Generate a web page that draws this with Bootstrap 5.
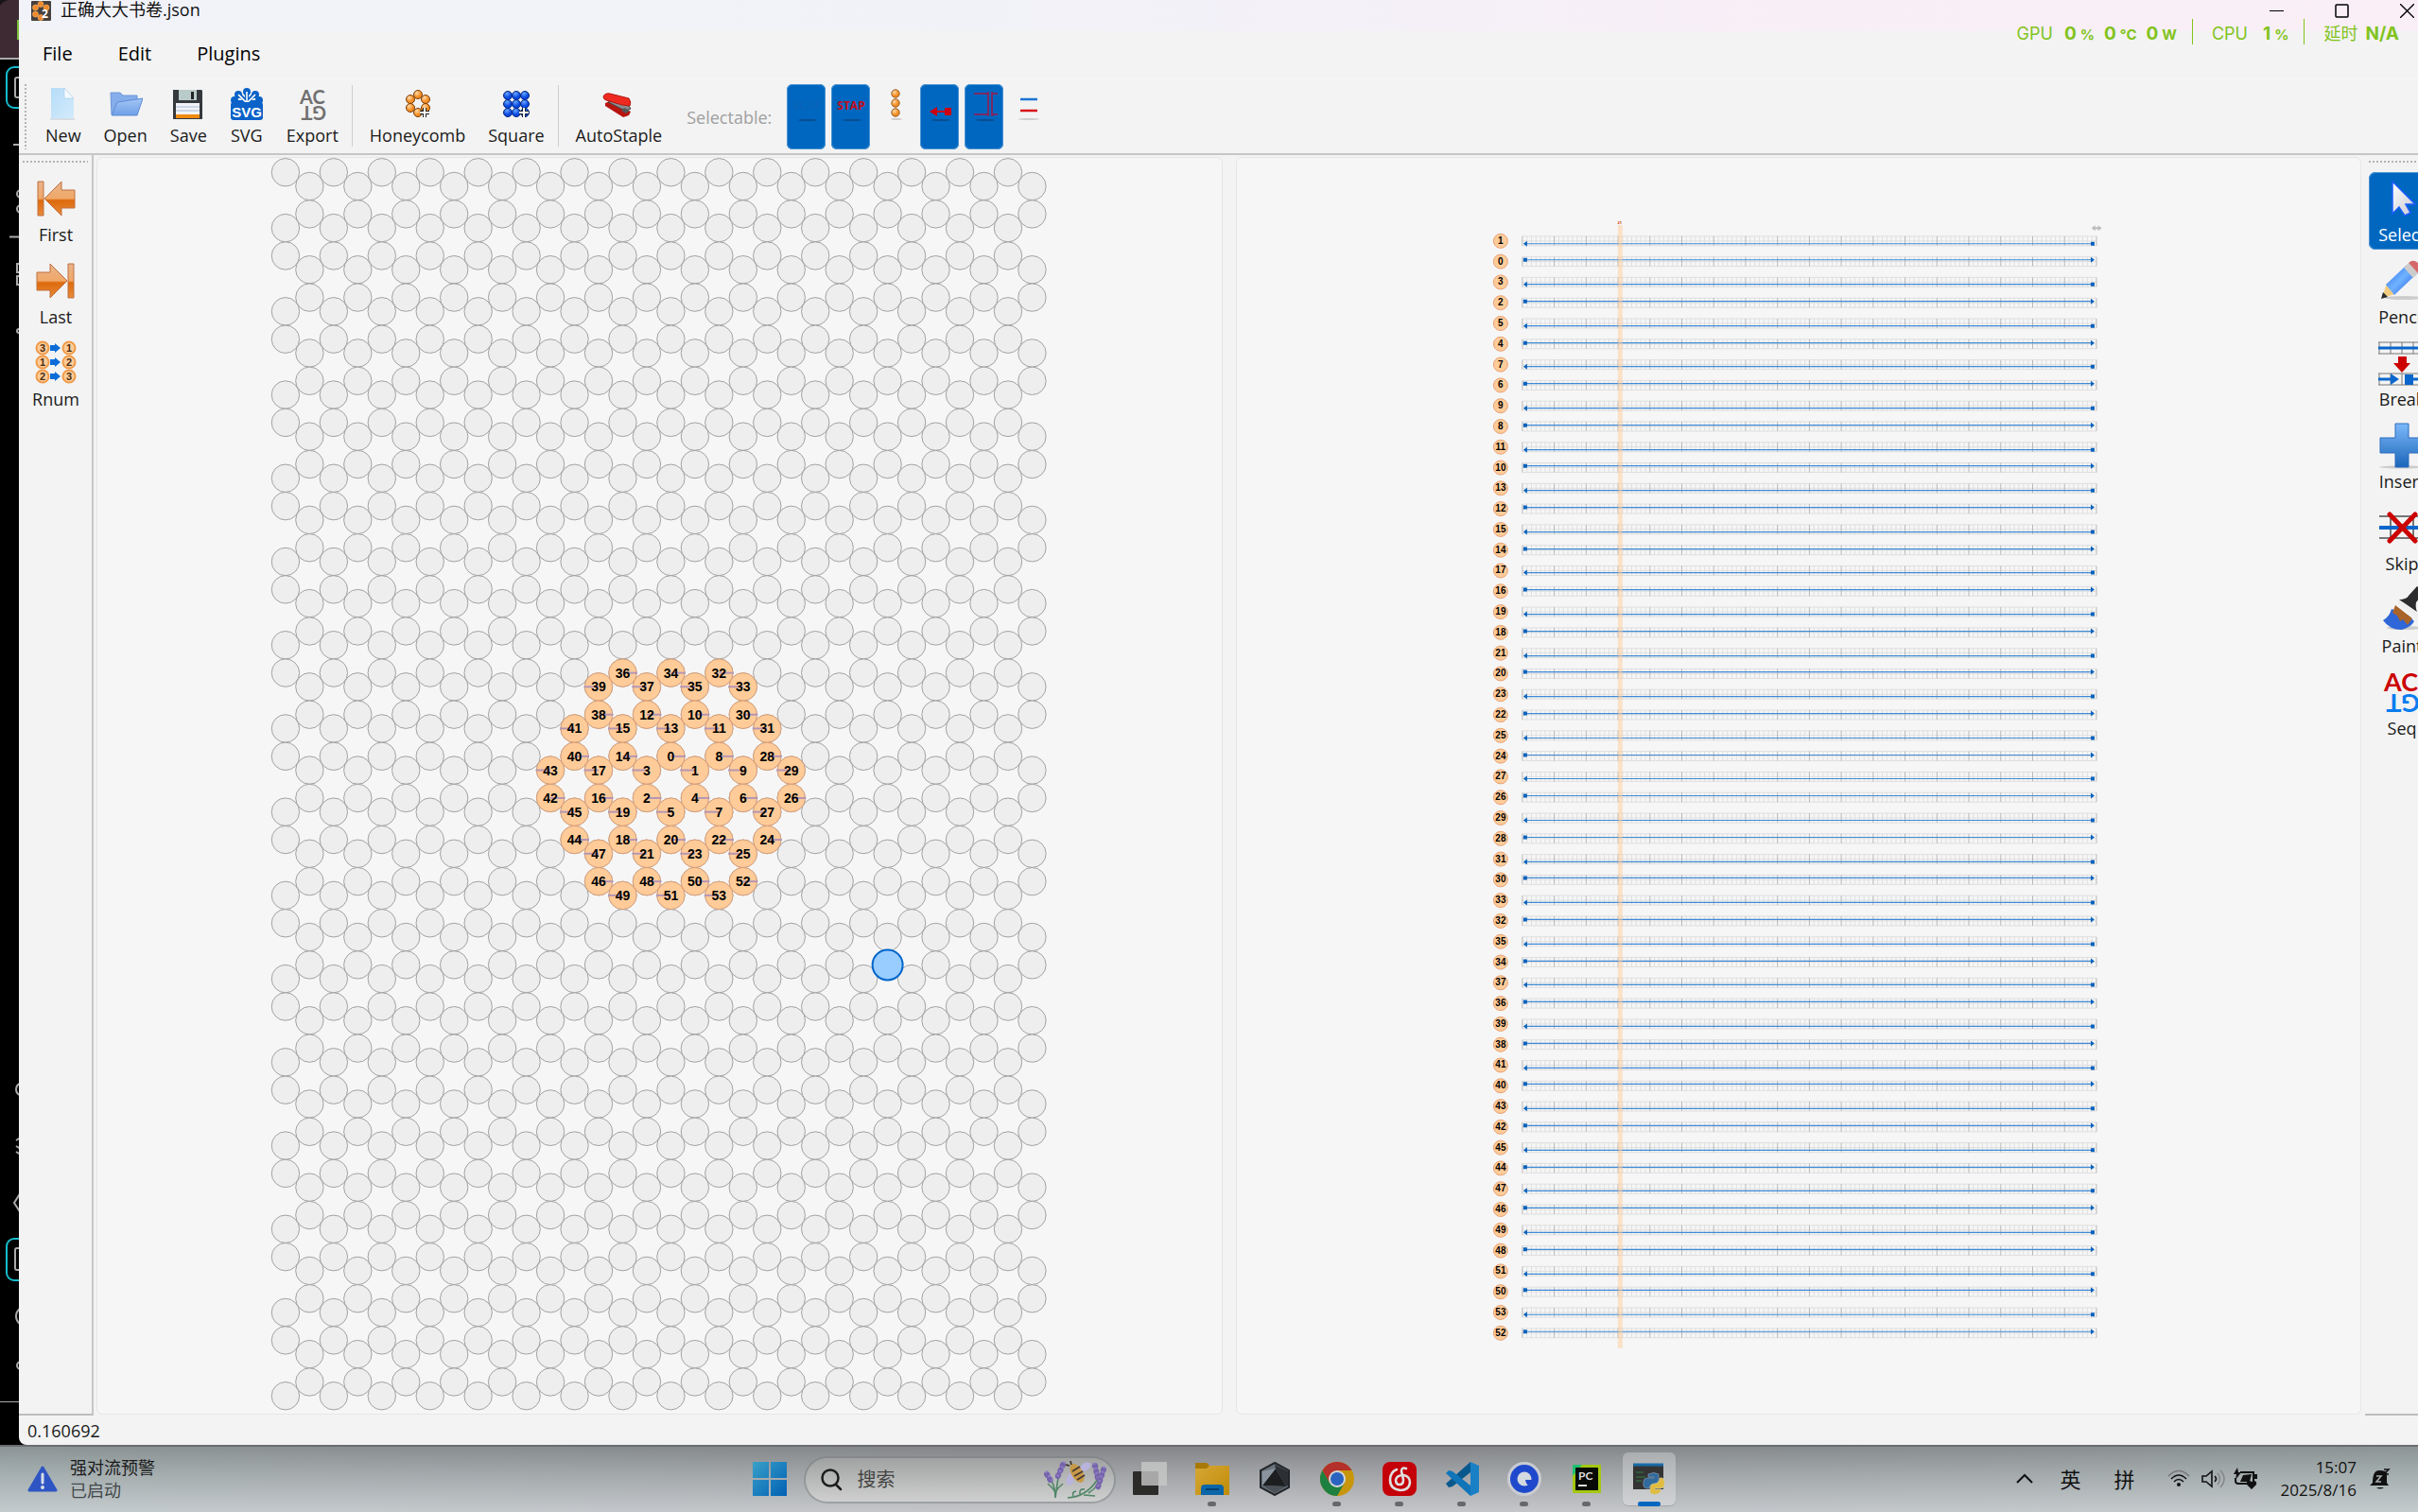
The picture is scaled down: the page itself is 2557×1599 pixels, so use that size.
<!DOCTYPE html>
<html lang="zh-CN">
<head>
<meta charset="utf-8">
<meta name="viewport" content="width=device-width, initial-scale=1">
<title>正确大大书卷.json</title>
<link href="https://cdn.jsdelivr.net/npm/bootstrap@5.3.0/dist/css/bootstrap.min.css" rel="stylesheet">
<style>
  html, body { height: 100%; }
  body { font-family: "Open Sans", "Noto Sans CJK SC", sans-serif; font-size: 18px; line-height: 26px; color: #1a1a1a; background: #000; overflow: hidden; }
  button { font: inherit; color: inherit; border: 0; background: none; padding: 0; }
  svg { display: block; flex: none; }
  .under-strip { width: 20px; background: #000; }
  .app-window { margin-right: -23px; background: #f3f3f3; border-bottom-left-radius: 8px; min-width: 0; }
  .title-strip { height: 33px; background: linear-gradient(90deg, #f1f3f9 0%, #f1f2f8 40%, #f8eef6 75%, #faeff7 100%); padding-left: 13px; }
  .title-text { line-height: 20px; margin-left: 10px; color: #111; }
  .caption-btn { width: 69px; height: 23px; }
  .menu-strip { height: 51px; font-size: 20px; color: #000; border-bottom: 1px solid #f8f8f8; padding: 0 0 2px 1px; }
  .menu-strip button { padding: 0 24px; }
  .tool-strip { height: 80px; border-bottom: 2px solid #c6c6c6; padding: 5px 0 4px 6px; }
  .grip-v { width: 2px; margin-right: 8px; background: repeating-linear-gradient(180deg, #b4b4b4 0 2px, transparent 2px 4px); }
  .tool { padding: 3px 12px 0; display: flex; flex-direction: column; align-items: center; border-radius: 6px; }
  .tool span { margin-top: 2px; }
  .rule { width: 1px; margin: 1px 6px 3px 2px; background: #cfcfcf; }
  .filter-label { color: #a0a0a0; padding: 0 16px 0 14px; }
  .filters { gap: 6px; }
  .filter { width: 41px; border-radius: 6px; display: flex; justify-content: center; padding-top: 3px; }
  .filter[aria-pressed=true], .side[aria-pressed=true] { background: #0067c0; box-shadow: inset 0 0 0 1px #4a94d4; color: #fff; }
  .side-strip { width: 79px; padding: 6px 4px 0; border-bottom: 2px solid #bdbdbd; background: #f3f3f3; }
  .side-left { border-right: 2px solid #c6c6c6; }
  .grip-h { height: 2px; margin-bottom: 10px; background: repeating-linear-gradient(90deg, #b4b4b4 0 2px, transparent 2px 4px); }
  .side { width: 70px; height: 82px; padding-top: 5px; margin-bottom: 5px; border-radius: 7px; display: flex; flex-direction: column; align-items: center; flex: none; }
  .side svg { overflow: visible; }
  .panes { gap: 14px; padding: 2px 4px 1px 3px; background: #f3f3f3; min-width: 0; }
  .pane { flex: 1 1 0; min-width: 0; min-height: 0; background: #f6f6f6; border: 1px solid #e6e6e6; border-radius: 6px; }
  .pane svg { width: 100%; height: 100%; }
  .status-strip { height: 31px; padding: 3px 9px; }
  .hud { top: 20px; right: 20px; height: 27px; color: #82c31e; font-family: Inter, "Noto Sans CJK SC", sans-serif; font-size: 18px; pointer-events: none; }
  .hud span, .hud b { padding-top: 5px; }
  .hud b { font-size: 19px; }
  .hud b small { font-size: 15px; font-weight: 700; margin-left: 4px; }
  .hud .reading { margin-left: 10px; }
  .hud i { width: 1px; height: 27px; background: #82c31e; }
  .task-strip { height: 71px; display: grid; grid-template-columns: 1fr auto 1fr; border-top: 2px solid #6a6c6d;
    background: linear-gradient(90deg, rgba(190,216,216,.25), rgba(200,190,200,.12) 40%, rgba(200,190,200,.12) 60%, rgba(190,216,214,.25)), linear-gradient(180deg, #7b7e80, #9b9fa1 40%, #c5c7ca); }
  .widget { padding: 0 0 2px 29px; gap: 13px; line-height: 24px; text-align: left; }
  .widget small { font-size: 18px; color: #43484a; display: block; }
  .launcher { width: 66px; height: 69px; display: flex; align-items: center; justify-content: center; position: relative; padding-bottom: 1px; }
  .launcher.open::after { content: ""; position: absolute; bottom: 6px; left: 28px; width: 9px; height: 5px; border-radius: 3px; background: #66686a; }
  .launcher.active::before { content: ""; position: absolute; inset: 6px 5px 7px 5px; border-radius: 6px; background: rgba(255,255,255,.28); box-shadow: 0 1px 1px rgba(0,0,0,.15); }
  .launcher.active::after { left: 21px; width: 24px; background: #0067c0; }
  .launcher svg { position: relative; }
  .search-pill { width: 326px; height: 46px; margin: 0 5px; border-radius: 23px; background: linear-gradient(180deg, #a0a2a2, #cfd0cf); box-shadow: 0 0 0 2px rgba(120,124,126,.45); padding: 0 8px 0 16px; }
  .search-pill input { font-size: 20px; border: 0; background: none; outline: 0; padding: 0; margin-left: 16px; width: 160px; color: #333; }
  .search-pill input::placeholder { color: #444; opacity: 1; }
  .tray { padding: 0 29px 2px 0; color: #111; }
  .tray .ime { font-size: 22px; margin-right: 35px; }
  .clock { font-size: 17px; line-height: 24px; text-align: right; margin: 0 13px 0 23px; }
</style>
</head>
<body class="d-flex flex-column vh-100">

<svg width="0" height="0" class="position-absolute">
  <defs>
    <linearGradient id="gOr" x2="0" y2="1"><stop offset="0" stop-color="#e9b48c"/><stop offset=".5" stop-color="#f0a868"/><stop offset=".55" stop-color="#dd6a0c"/><stop offset="1" stop-color="#e88a3a"/></linearGradient>
    <radialGradient id="gBall" cx=".35" cy=".3"><stop offset="0" stop-color="#ffd9a8"/><stop offset="1" stop-color="#f58c20"/></radialGradient>
    <radialGradient id="gBlue" cx=".4" cy=".25"><stop offset="0" stop-color="#6aa8ff"/><stop offset="1" stop-color="#0a48e0"/></radialGradient>
    <linearGradient id="gDoc" x2="1" y2="1"><stop offset="0" stop-color="#b6dcf8"/><stop offset="1" stop-color="#d3ebfb"/></linearGradient>
    <linearGradient id="gFold" x2="0" y2="1"><stop offset="0" stop-color="#a4c6f5"/><stop offset="1" stop-color="#6f9fe8"/></linearGradient>
    <linearGradient id="gPlus" x2="0" y2="1"><stop offset="0" stop-color="#7db8fa"/><stop offset="1" stop-color="#1a66b8"/></linearGradient>
    <linearGradient id="gPen" x2="1" y2="1"><stop offset="0" stop-color="#2a62f0"/><stop offset=".5" stop-color="#6fb4ff"/><stop offset="1" stop-color="#1c4ee0"/></linearGradient>
    <linearGradient id="gWin" x2="1" y2="1"><stop offset="0" stop-color="#3aa0c8"/><stop offset="1" stop-color="#0060b4"/></linearGradient>
    <linearGradient id="gDir" x2="1" y2="1"><stop offset="0" stop-color="#d8a838"/><stop offset="1" stop-color="#c08c08"/></linearGradient>
    <linearGradient id="gCur" x2="1" y2="1"><stop offset="0" stop-color="#fff"/><stop offset="1" stop-color="#c8c8d0"/></linearGradient>
  </defs>
</svg>

<div class="d-flex flex-grow-1 position-relative" style="min-height:0">
  <div class="under-strip d-flex flex-column justify-content-between" aria-hidden="true">
    <svg width="20" height="360" viewBox="0 0 20 360" fill="none" stroke="#aaa" stroke-width="2">
      <rect width="20" height="61" fill="#3d2a33" stroke="none"/><path d="M0 62h20" /><path d="M0 0h9q-6 1-9 6z" fill="#181418" stroke="none"/>
      <rect x="18" y="21" width="2" height="21" fill="#7bbf3a" stroke="none"/>
      <rect x="7" y="71" width="30" height="43" rx="8" stroke="#16bccc"/><rect x="16" y="82" width="20" height="21" rx="2"/>
      <path d="M14 153h6M10 250.500h10"/><circle cx="22" cy="205" r="4"/><circle cx="22" cy="221" r="4"/><rect x="18" y="279" width="9" height="9"/><rect x="18" y="292" width="9" height="9"/><circle cx="20" cy="350" r="2"/>
    </svg>
    <svg width="20" height="388" viewBox="0 0 20 388" fill="none" stroke="#aaa" stroke-width="2">
      <ellipse cx="22" cy="12" rx="5" ry="6"/><path d="M17 66l5-3M17 72l5 3M17 78l5 3M22 121l-7 11 7 11"/>
      <rect x="7" y="170" width="30" height="44" rx="8" stroke="#16bccc"/><rect x="16" y="180" width="20" height="23" rx="2"/>
      <circle cx="27" cy="252" r="10"/><circle cx="22" cy="304" r="4"/><path d="M0 342.500h20" stroke-width="1"/>
    </svg>
  </div>

  <main class="app-window d-flex flex-column flex-grow-1">
    <header class="title-strip d-flex align-items-start">
      <svg width="21" height="22" viewBox="0 -1 21 22"><rect width="21" height="21" rx="1" fill="#47403c"/><g fill="#ee8a2c" stroke="#ffb870" stroke-width=".6"><circle cx="10" cy="3.500" r="3"/><circle cx="4.500" cy="7" r="3"/><circle cx="16" cy="7" r="3"/><circle cx="4.500" cy="14" r="3"/><circle cx="10" cy="17.500" r="3"/></g><text x="11" y="18" font-size="12" font-weight="700" fill="#fff">2</text></svg>
      <div class="title-text flex-grow-1">正确大大书卷.json</div>
      <button class="caption-btn" aria-label="最小化"><svg class="mx-auto" width="15" height="15" stroke="#000" stroke-width="1"><path d="M0 7.500h15"/></svg></button>
      <button class="caption-btn" aria-label="最大化"><svg class="mx-auto" width="15" height="15" fill="none" stroke="#000" stroke-width="1.500"><rect x="1" y="1" width="13" height="13" rx="1"/></svg></button>
      <button class="caption-btn" aria-label="关闭"><svg class="mx-auto" width="15" height="15" stroke="#000" stroke-width="1.300"><path d="M0 0l15 15M15 0L0 15"/></svg></button>
    </header>

    <nav class="menu-strip d-flex"><button>File</button><button>Edit</button><button>Plugins</button></nav>

    <div class="tool-strip d-flex" role="toolbar">
      <div class="grip-v"></div>
      <button class="tool"><svg width="36" height="36"><path d="M5 1h14l10 11v21H5z" fill="url(#gDoc)"/><path d="M19 1l10 11h-10z" fill="#f4faff" stroke="#b0d0ea" stroke-width=".7"/><path d="M4 34h26" stroke="#b8c8d4"/></svg><span>New</span></button>
      <button class="tool"><svg width="36" height="36"><path d="M2 6h10l3 3h15v20H3z" fill="#86aeea" stroke="#6a95da"/><path d="M9 16l27-4-6 18H3z" fill="url(#gFold)" stroke="#5f8cd8"/></svg><span>Open</span></button>
      <button class="tool"><svg width="36" height="36"><path d="M2 3h30l1 1v30H2z" fill="#35383c"/><path d="M8 3h19v11H8z" fill="#b9cbc9"/><path d="M21 5h3v8h-3z" fill="#222"/><path d="M5 17h25v13H5z" fill="#f1f3f6"/><path d="M5 21h25M5 25h25" stroke="#a8bcd8"/><path d="M5 29h25v4H5z" fill="#f08a10"/></svg><span>Save</span></button>
      <button class="tool"><svg width="36" height="36"><g stroke="#0b62c8" stroke-width="4" stroke-linecap="round"><path d="M18 16V5M18 16L9 7M18 16l9-9M18 16H6M18 16h12"/></g><g fill="#0b62c8"><circle cx="18" cy="5" r="4"/><circle cx="9" cy="8" r="4"/><circle cx="27" cy="8" r="4"/><circle cx="5" cy="14" r="4"/><circle cx="31" cy="14" r="4"/></g><g stroke="#fff" stroke-width="1.600"><path d="M18 17V5M18 17L9 8M18 17l9-9"/></g><rect x="1" y="16" width="34" height="19" rx="3" fill="#0b62c8"/><text x="18" y="32" text-anchor="middle" font-family="Liberation Sans" font-size="15" font-weight="700" fill="#fff">SVG</text></svg><span>SVG</span></button>
      <button class="tool"><svg width="36" height="36" fill="#707070" font-family="Lato" font-weight="700" font-size="20"><text x="5" y="18">AC</text><text transform="translate(33 20) rotate(180)">GT</text></svg><span>Export</span></button>
      <div class="rule"></div>
      <button class="tool"><svg width="36" height="36" stroke="#7a3c08"><g fill="url(#gBall)"><circle cx="18" cy="8" r="4.500"/><circle cx="10" cy="13" r="4.500"/><circle cx="26" cy="13" r="4.500"/><circle cx="10" cy="22" r="4.500"/><circle cx="26" cy="22" r="4.500"/><circle cx="18" cy="27" r="4.500"/></g><path d="M25 22v10M20 27h10" stroke="#222" stroke-width="4"/><path d="M25 22v10M20 27h10" stroke="#fff" stroke-width="2"/></svg><span>Honeycomb</span></button>
      <button class="tool"><svg width="36" height="36" stroke="#03277c"><g fill="url(#gBlue)"><circle cx="9" cy="9" r="4.500"/><circle cx="18" cy="9" r="4.500"/><circle cx="27" cy="9" r="4.500"/><circle cx="9" cy="18" r="4.500"/><circle cx="18" cy="18" r="4.500"/><circle cx="27" cy="18" r="4.500"/><circle cx="9" cy="27" r="4.500"/><circle cx="18" cy="27" r="4.500"/><circle cx="27" cy="27" r="4.500"/></g><path d="M26 22v10M21 27h10" stroke="#123" stroke-width="4"/><path d="M26 22v10M21 27h10" stroke="#fff" stroke-width="2"/></svg><span>Square</span></button>
      <div class="rule"></div>
      <button class="tool"><svg width="36" height="36"><path d="M4 17l5-2 22 11-2 4-6 2L4 20z" fill="#b81410"/><path d="M7 16l18 9 6-2-2-3-12-6z" fill="#8c8c8c" stroke="#444"/><path d="M24 22l6 3-4 3-5-3z" fill="#555"/><path d="M2 10q2-4 7-3l20 5q3 4 1 8l-8-1L5 14q-3-1-3-4z" fill="#ee2a20" stroke="#b01812"/></svg><span>AutoStaple</span></button>
      <div class="filter-label align-self-center">Selectable:</div>
      <div class="filters d-flex">
        <button class="filter" aria-pressed="true" aria-label="Scaffold"><svg width="34" height="36"><text x="17" y="24" text-anchor="middle" font-size="12" font-weight="700" fill="#0763b8">SCAF</text><ellipse cx="18" cy="35" rx="10" ry="1" fill="#0a4b8c"/></svg></button>
        <button class="filter" aria-pressed="true" aria-label="Staple"><svg width="34" height="36"><text x="17" y="24" text-anchor="middle" font-size="12" font-weight="700" fill="#c40a18">STAP</text><ellipse cx="18" cy="35" rx="10" ry="1" fill="#0a4b8c"/></svg></button>
        <button class="filter" aria-pressed="false" aria-label="Helix"><svg width="34" height="36"><g fill="url(#gBall)" stroke="#94602c"><circle cx="17" cy="7" r="4.200"/><circle cx="17" cy="17" r="4.200"/><circle cx="17" cy="27" r="4.200"/></g><ellipse cx="18" cy="34" rx="6" ry="1" fill="#ccc"/></svg></button>
        <button class="filter" aria-pressed="true" aria-label="Endpoint"><svg width="34" height="36"><path d="M6 26l8-5v10zM22 22h7v8h-7z" fill="#cc0010"/><path d="M12 26h12" stroke="#cc0010" stroke-width="2"/><ellipse cx="18" cy="35" rx="10" ry="1" fill="#0a4b8c"/></svg></button>
        <button class="filter" aria-pressed="true" aria-label="Crossover"><svg width="34" height="36" fill="none" stroke="#a01848" stroke-width="1.500"><path d="M6 7h15v22H6M31 7h-6v22h6M21 5v26M25 5v26"/><ellipse cx="18" cy="35" rx="10" ry="1" fill="#0a4b8c" stroke="none"/></svg></button>
        <button class="filter" aria-pressed="false" aria-label="Strand"><svg width="34" height="36" stroke-width="2.500"><path d="M8 13h18" stroke="#1a74d4"/><path d="M8 25h18" stroke="#d81018"/><ellipse cx="17" cy="34" rx="11" ry="1" fill="#ccc"/></svg></button>
      </div>
    </div>

    <div class="d-flex flex-grow-1" style="min-height:0">
      <aside class="side-strip side-left d-flex flex-column" role="toolbar">
        <div class="grip-h flex-shrink-0"></div>
        <button class="side"><svg width="48" height="48" fill="url(#gOr)" stroke="#c07040"><path d="M5 5h6v36H5zM12 23L30 5v9h14v19H30v8z"/></svg><span>First</span></button>
        <button class="side"><svg width="48" height="48" fill="url(#gOr)" stroke="#c07040"><path d="M37 5h6v36h-6zM36 23L18 5v9H4v19h14v8z"/></svg><span>Last</span></button>
        <button class="side"><svg width="48" height="48" font-family="Liberation Sans" font-size="11" font-weight="700" text-anchor="middle"><g fill="#ffcc99" stroke="#f09a48" stroke-width="2"><circle cx="10" cy="7" r="6.500"/><circle cx="38" cy="7" r="6.500"/><circle cx="10" cy="22" r="6.500"/><circle cx="38" cy="22" r="6.500"/><circle cx="10" cy="37" r="6.500"/><circle cx="38" cy="37" r="6.500"/></g><path d="M18 4h5V2l6 5-6 5v-2h-5zM18 19h5v-2l6 5-6 5v-2h-5zM18 34h5v-2l6 5-6 5v-2h-5z" fill="#0a6cd8"/><g fill="#4a2c10"><text x="10" y="11">3</text><text x="38" y="11">1</text><text x="10" y="26">1</text><text x="38" y="26">2</text><text x="10" y="41">2</text><text x="38" y="41">3</text></g></svg><span>Rnum</span></button>
      </aside>

      <section class="panes d-flex flex-grow-1">
        <div class="pane"><svg id="slice" viewBox="0 0 1189 1328" role="img" aria-label="Slice view"></svg></div>
        <div class="pane"><svg id="path" viewBox="0 0 1189 1328" role="img" aria-label="Path view"></svg></div>
      </section>

      <aside class="side-strip d-flex flex-column" role="toolbar">
        <div class="grip-h flex-shrink-0"></div>
        <button class="side" aria-pressed="true"><svg width="48" height="48"><path d="M14 5v34l7-7 6 9 6-3-5-9h10z" fill="url(#gCur)" stroke="#1a5cff" stroke-width="1.500"/></svg><span>Select</span></button>
        <button class="side"><svg width="48" height="48"><ellipse cx="26" cy="41" rx="20" ry="2" fill="#ccc"/><path d="M3 41l5-16 9 12z" fill="#f2cc80"/><path d="M2 42l2-7 5 5z" fill="#2a2a2a"/><path d="M7 27L28 7l9 11-21 20z" fill="url(#gPen)"/><path d="M26 9l5-5 10 11-5 5z" fill="#ccc"/><path d="M31 4q5-5 11 1t0 11z" fill="#d4686a"/></svg><span>Pencil</span></button>
        <button class="side"><svg width="50" height="48" fill="none" stroke="#777"><path d="M0 1h50M0 13h50M1 1v12M13 1v12M25 1v12M37 1v12M49 1v12M0 34h50M0 46h50M1 34v12M13 34v12M25 34v12M49 34v12"/><path d="M0 7h50M0 40h14M34 40h16" stroke="#0a66cc" stroke-width="3"/><path d="M13 34l9 6-9 6zM28 35h9v11h-9z" fill="#0a66cc" stroke="none"/><path d="M21 16h9v7h4l-9 10-9-10h5z" fill="#cc0000" stroke="none"/></svg><span>Break</span></button>
        <button class="side"><svg width="48" height="48"><ellipse cx="24" cy="46" rx="24" ry="1.500" fill="#ccc"/><path d="M17 0h14v15h16v16H31v15H17V31H1V15h16z" fill="url(#gPlus)" stroke="#2a6cc0"/></svg><span>Insert</span></button>
        <button class="side"><svg width="48" height="48" fill="none" stroke="#777" stroke-width="2"><path d="M0 11h48M0 34h48M12 11v23M36 11v23"/><path d="M0 23h48" stroke="#0a66cc" stroke-width="4"/><path d="M11 9l27 28M38 9L11 37" stroke="#cc0000" stroke-width="5" stroke-linecap="round"/></svg><span>Skip</span></button>
        <button class="side"><svg width="48" height="48"><ellipse cx="26" cy="42" rx="18" ry="2" fill="#ccc"/><path d="M13 22q-2 8-9 12 7 10 20 10 10-3 13-9l-6-6z" fill="#2f66d8"/><path d="M17 18l18 14-5 7-5-6-3 2-3-6-5-3z" fill="#a8642a"/><path d="M20 14l21 16" stroke="#eee" stroke-width="4"/><path d="M21 12q8 0 10-4l9-10 8 6-9 11q-1 6 1 10z" fill="#2c2c2e"/></svg><span>Paint</span></button>
        <button class="side"><svg width="48" height="48" font-family="Lato" font-weight="700" font-size="27"><text x="5" y="22" fill="#cc0000">AC</text><text transform="translate(43 25) rotate(180)" fill="#0a7cf0">GT</text></svg><span>Seq</span></button>
      </aside>
    </div>

    <footer class="status-strip">0.160692</footer>
  </main>

  <div class="hud position-absolute d-flex align-items-center">
    <span>GPU</span><b class="ms-2 ps-1">0<small>%</small></b><b class="reading">0<small>°C</small></b><b class="reading">0<small>W</small></b>
    <i class="mx-3"></i><span class="ms-1">CPU</span><b class="ms-3">1<small>%</small></b><i class="mx-3"></i><span class="ms-1">延时</span><b class="ms-2">N/A</b>
  </div>
</div>

<footer class="task-strip">
  <button class="widget d-flex align-items-center"><svg width="32" height="28"><path d="M16 2L30 26H2z" fill="#2f55c4" stroke="#2f55c4" stroke-width="3" stroke-linejoin="round"/><path d="M16 9v9" stroke="#d8dde8" stroke-width="3" stroke-linecap="round"/><circle cx="16" cy="23" r="2" fill="#d8dde8"/></svg><span>强对流预警<small>已启动</small></span></button>

  <nav class="d-flex align-items-center">
    <button class="launcher" aria-label="开始"><svg width="36" height="36" fill="url(#gWin)"><path d="M0 0h17v17H0zM19 0h17v17H19zM0 19h17v17H0zM19 19h17v17H19z"/></svg></button>
    <div class="search-pill d-flex align-items-center">
      <svg width="23" height="24" fill="none" stroke="#1c1c1c" stroke-width="2.500" stroke-linecap="round"><circle cx="10" cy="10" r="8.500"/><path d="M16 17l5 5"/></svg>
      <input type="search" placeholder="搜索" aria-label="搜索">
      <svg class="ms-auto" width="66" height="40" fill="none" stroke="#4f8666" stroke-width="1.600"><path d="M6 18q6 8 6 21M17 8q-3 14-5 31M4 24q5 4 8 9M20 24q-5 4-8 9M25 39q20-1 32-20M31 37q-2-4 3-5M38 35q-1-6 5-5M61 12q-2 15-14 22M42 36l12 1"/><g stroke="#7563ac" stroke-width="6" stroke-linecap="round" stroke-dasharray="1 5"><path d="M3 14l6 10M20 4l-7 16M54 5l3 14M63 9l-7 22"/></g><g stroke="#8d7cc0" stroke-width="3" stroke-dasharray="2 3"><path d="M2 11l8 12M22 1l-9 18M53 2l4 16M64 6l-8 24"/></g><g fill="#b8b4dc" stroke="none"><ellipse cx="44" cy="6" rx="6" ry="4" transform="rotate(-30 44 6)"/><ellipse cx="28" cy="19" rx="4" ry="7" transform="rotate(20 28 19)"/></g><ellipse cx="35" cy="13" rx="6" ry="11" transform="rotate(-30 35 13)" fill="#c89a48" stroke="none"/><path d="M30 11l8-5M32 16l9-5M35 20l8-5" stroke="#4a3c34" stroke-width="2"/><path d="M29 4l-1-4M27 5l-4-1" stroke="#3a2c24"/></svg>
    </div>
    <button class="launcher" aria-label="任务视图"><svg width="36" height="36"><rect x="0" y="10" width="27" height="25" rx="1" fill="#2b2b2a"/><rect x="9" y="0" width="27" height="25" rx="1" fill="#c8c8c8" opacity=".8"/></svg></button>
    <button class="launcher open" aria-label="文件资源管理器"><svg width="36" height="34"><path d="M0 0h12l3 3h21v31H0z" fill="url(#gDir)"/><path d="M0 0h12l3 3-3 3H0z" fill="#a87808"/><path d="M6 34v-7q0-4 4-4h16q4 0 4 4v7z" fill="#0a66a8"/><path d="M11 28h14" stroke="#053f70" stroke-width="2"/></svg></button>
    <button class="launcher" aria-label="应用"><svg width="34" height="36"><path d="M17 1l15 8v18l-15 8L2 27V9z" fill="#6a737c" stroke="#22262a" stroke-width="2"/><path d="M18 7l11 19-25-1z" fill="#1c1e20"/><path d="M18 7L4 25V10z" fill="#8a949e"/><path d="M4 25l25 1-12 7z" fill="#4a5056"/><path d="M18 7l11 19 2-1V10L17 3z" fill="#2c3034"/></svg></button>
    <button class="launcher open" aria-label="Chrome"><svg width="36" height="36"><circle cx="18" cy="18" r="18" fill="#c8960c"/><path d="M18 9h15.600A18 18 0 0 0 2.400 9L10 22z" fill="#b4302a"/><path d="M2.400 9A18 18 0 0 0 18 36l8-14-8 5-8-5z" fill="#1e8040"/><circle cx="18" cy="18" r="9" fill="#d4d4d4"/><circle cx="18" cy="18" r="7" fill="#2a64c0"/></svg></button>
    <button class="launcher open" aria-label="网易云音乐"><svg width="36" height="36"><rect width="36" height="36" rx="8" fill="#c40008"/><path d="M25 7q-5-2-5 3l2 9q0 5-4 5t-4-5q1-5 8-5 7 1 7 8-1 8-10 8-11-1-11-11 0-8 7-11" fill="none" stroke="#e0e0e0" stroke-width="2.600" stroke-linecap="round"/></svg></button>
    <button class="launcher open" aria-label="VS Code"><svg width="36" height="36"><path d="M27 0v11L8 26l-4 1-3-4z" fill="#08588e"/><path d="M1 12l3-3 4 1 19 15v11z" fill="#0f74b8"/><path d="M27 0l9 4v28l-9 4z" fill="#1a80c6"/></svg></button>
    <button class="launcher open" aria-label="夸克"><svg width="36" height="36"><circle cx="18" cy="18" r="18" fill="#c9ccd2"/><circle cx="18" cy="18" r="15" fill="#1f49cc"/><circle cx="18" cy="18" r="7.500" fill="#d4d8e0"/><path d="M19 19h7v7q-6 0-7-7z" fill="#1f49cc"/></svg></button>
    <button class="launcher open" aria-label="PyCharm"><svg width="30" height="30"><rect width="30" height="30" fill="#a4c810"/><path d="M0 0h10L0 12z" fill="#1fc070"/><rect x="3" y="3" width="24" height="24" fill="#080a08"/><text x="6" y="16" font-family="Lato" font-size="12" font-weight="700" fill="#ddd">PC</text><path d="M6 22h9" stroke="#ddd" stroke-width="2"/></svg></button>
    <button class="launcher open active" aria-label="Python"><svg width="36" height="36"><rect x="1" y="2" width="32" height="27" fill="#343434"/><path d="M1 3h32" stroke="#1a6ca8" stroke-width="3"/><path d="M4 11h8M4 16h10M4 20h6" stroke="#2e8040"/><path d="M17 13q6-3 11 0v8q-1 3-5 3-5 0-5 4h-3q-4-1-3-7 0-4 5-4h6v-1h-6z" fill="#306a9c" stroke="#9ab" stroke-width=".6"/><path d="M29 17h3q3 2 2 7 0 4-4 4h-6v1h6v3q-5 4-11 1v-6q0-4 5-4 5-1 5-6z" fill="#e0bc40" stroke="#ccb" stroke-width=".6"/></svg></button>
  </nav>

  <div class="tray d-flex align-items-center justify-content-end">
    <svg width="18" height="12" class="me-4" fill="none" stroke="#111" stroke-width="2"><path d="M1 10l8-8 8 8"/></svg>
    <span class="ime ms-1">英</span><span class="ime">拼</span>
    <svg width="24" height="20" class="me-2" fill="none" stroke="#111" stroke-width="1.600"><path d="M1 7q11-11 22 0" stroke="#777"/><path d="M4 10q8-8 16 0M7 13q5-5 10 0"/><circle cx="12" cy="16" r="2" fill="#111" stroke="none"/></svg>
    <svg width="26" height="20" class="ms-1 me-2" fill="none" stroke="#111" stroke-width="1.600"><path d="M1 7h4l6-5v16l-6-5H1zM14 7q3 3 0 6"/><path d="M17 4q5 6 0 12M20 1q8 9 0 18" stroke="#888"/></svg>
    <svg width="26" height="24"><path d="M7 5h14v12H5q-3 0-3-3v-3" fill="none" stroke="#111" stroke-width="2"/><path d="M10 8l9-1-2 8H7z" fill="#111"/><path d="M21 7h4v5h-4zM4 0L0 7h3l-1 6 6-8H5z" fill="#111"/><path d="M19 23l-5-5q-1-4 3-4l2 1 2-1q4 0 3 4z" fill="#111"/></svg>
    <div class="clock">15:07<br>2025/8/16</div>
    <svg width="23" height="24"><path d="M4 16q0-13 7-13t8 3v10l2 3H1z" fill="#111"/><path d="M8 21h8q-4 3-8 0z" fill="#111"/><g fill="none" stroke="#a8b0b0" stroke-width="1.500"><path d="M8 9h5l-5 6h5"/></g><path d="M16 2h5l-5 5h5" fill="none" stroke="#111" stroke-width="1.500"/></svg>
  </div>
</footer>

<script src="https://cdn.jsdelivr.net/npm/bootstrap@5.3.0/dist/js/bootstrap.bundle.min.js"></script>
<script>
  // Slice view: honeycomb lattice, 30 rows by 32 columns
  const R = 14.71, DX = R * Math.sqrt(3), X0 = 199, Y0 = 15;
  const cx = c => X0 + c * DX;
  const cy = (r, c) => Y0 + r * 3 * R + ((r + c) % 2 ? R : 0);
  const used = {
    12: [13, [39,36,37,34,35,32,33]],
    13: [12, [41,38,15,12,13,10,11,30,31]],
    14: [11, [43,40,17,14,3,0,1,8,9,28,29]],
    15: [11, [42,45,16,19,2,5,4,7,6,27,26]],
    16: [12, [44,47,18,21,20,23,22,25,24]],
    17: [13, [46,49,48,51,50,53,52]]
  };
  let s = '<g fill="#eeeeee" stroke="#999" stroke-width=".9">';
  for (let r = 0; r < 30; r++) for (let c = 0; c < 32; c++)
    s += `<circle cx="${cx(c)}" cy="${cy(r, c)}" r="${R}"/>`;
  s += '</g>';
  let discs = '', marks = '';
  for (const r in used) used[r][1].forEach((n, i) => {
    const c = used[r][0] + i, x = cx(c), y = cy(+r, c);
    discs += `<circle cx="${x}" cy="${y}" r="${R}"/>`;
    marks += `<path d="M${x} ${y}h${n % 2 ? -15.5 : 15.5}" stroke="#b496b4" stroke-width="2"/><text x="${x}" y="${y + 5}">${n}</text>`;
  });
  s += `<g fill="#ffcc99" stroke="#d69a74" stroke-width=".9">${discs}</g>`;
  s += `<g font-family="Liberation Sans" font-weight="700" font-size="14" text-anchor="middle">${marks}</g>`;
  s += `<circle cx="${cx(25)}" cy="${cy(19, 25)}" r="16" fill="#99ccff" stroke="#0066cc" stroke-width="2"/>`;
  document.getElementById('slice').innerHTML = s;

  // Path view: one 126-base track for each helix
  const GX = 302, CW = 4.82, GW = CW * 126, PITCH = 21.8;
  let grid = '', heavy = '', strands = '', heads = '', labels = '';
  for (let i = 0; i < 54; i++) {
    const n = i ^ 1, y = 87.6 + i * PITCH, t = y - 5, b = y + 5;
    grid += `M${GX} ${t}h${GW}M${GX} ${y}h${GW}M${GX} ${b}h${GW}`;
    for (let k = 0; k <= 126; k++) {
      if (k % 7) grid += `M${GX + k * CW} ${t}v10`; else heavy += `M${GX + k * CW} ${t}v10`;
    }
    const l = GX + 3, e = GX + GW - 4, sy = Math.round(n % 2 ? y + 2 : y - 2) + .5;
    strands += `M${l} ${sy}H${e}`;
    heads += n % 2 ? `M${l - 2} ${sy}l4 -3v6zM${e - 2} ${sy - 2}h4v4h-4z` : `M${e + 2} ${sy}l-4 -3v6zM${l - 2} ${sy - 2}h4v4h-4z`;
    labels += `<circle cx="279" cy="${y}" r="7.500" fill="#ffcc99" stroke="#e8a074"/><text x="279" y="${y + 3}">${n}</text>`;
  }
  document.getElementById('path').innerHTML =
    `<path d="${grid}" fill="none" stroke="#dfdfdf" stroke-width="1"/>
     <path d="${heavy}" fill="none" stroke="#b8b8b8" stroke-width="1"/>
     <path d="${strands}" fill="none" stroke="#3f8ad6" stroke-width="1.200"/>
     <path d="${heads}" fill="#0a62bc"/>
     <g font-family="Liberation Sans" font-weight="700" font-size="10" text-anchor="middle">${labels}</g>
     <rect x="403" y="71" width="5" height="1188" fill="#ffcc99" opacity=".5"/>
     <text x="405" y="70" font-size="4" font-weight="700" fill="#cc3300" text-anchor="middle">21</text>
     <path d="M904 74l4-3v2h2v2h-2v2zM915 74l-4-3v2h-1v2h1v2z" fill="#bbb"/>`;
</script>
</body>
</html>
